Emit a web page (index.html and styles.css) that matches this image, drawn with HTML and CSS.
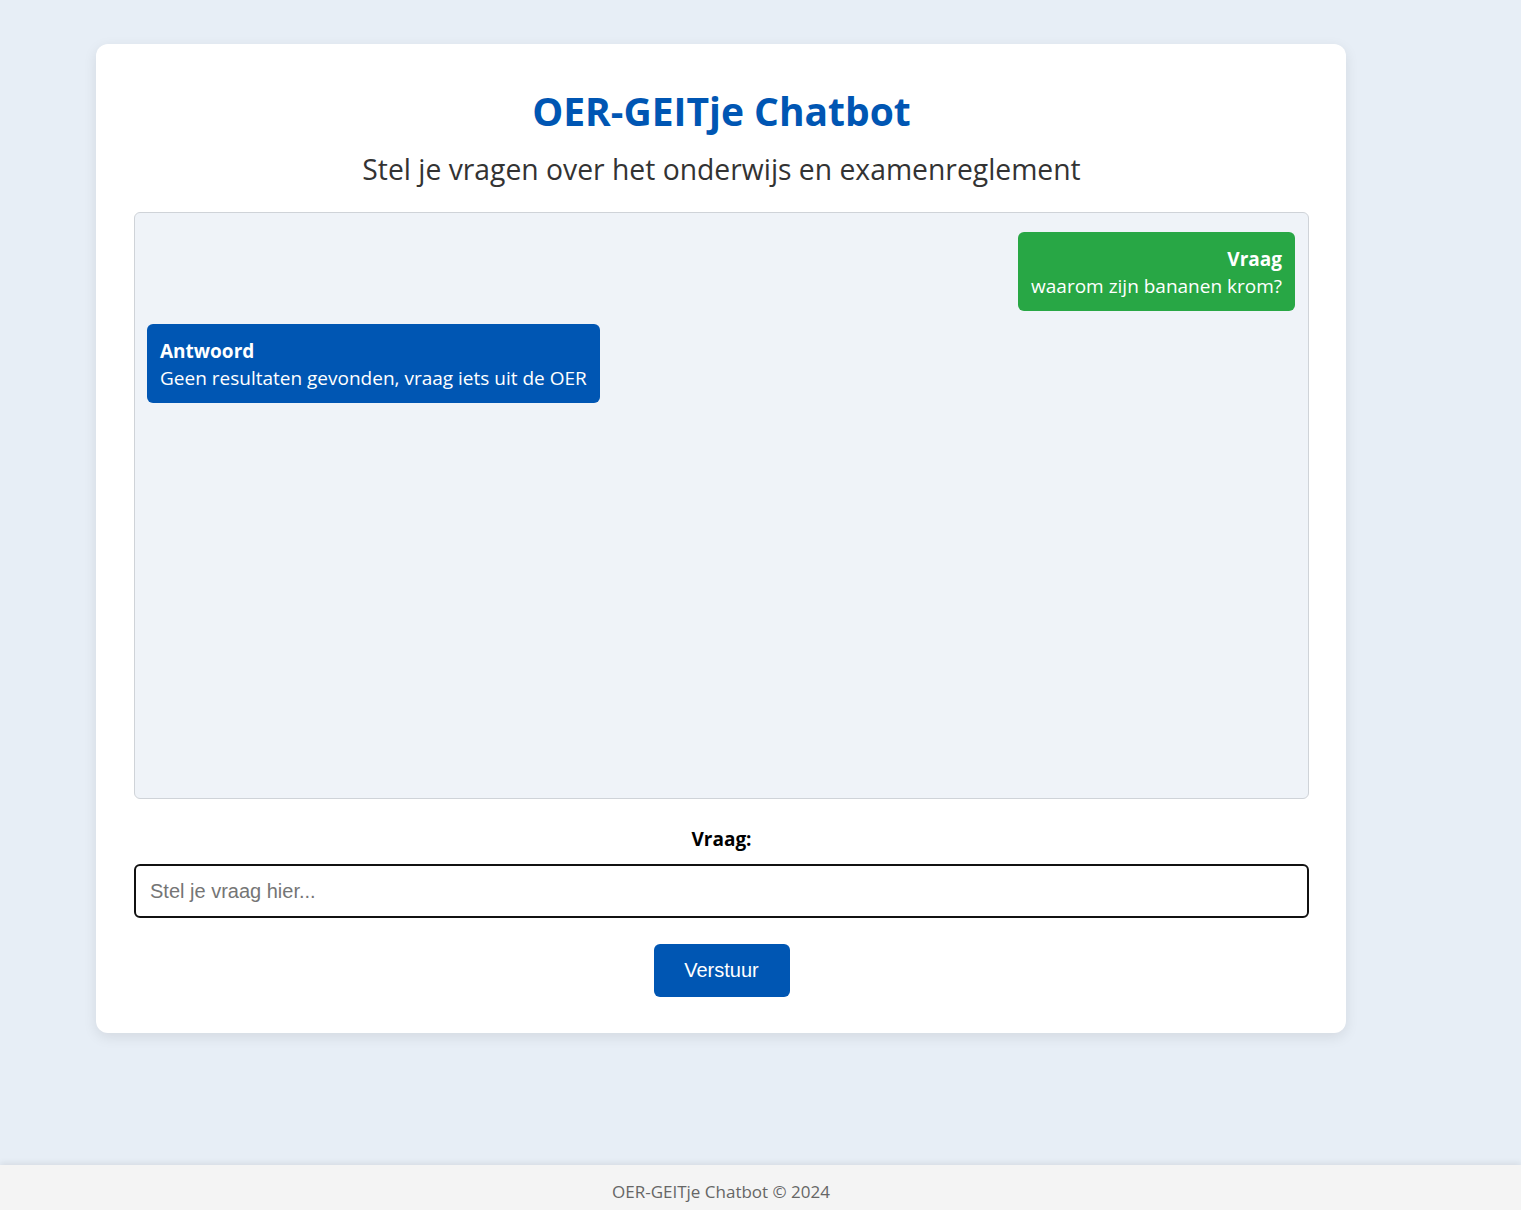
FILE: index.html
```html
<!DOCTYPE html>
<html lang="nl">
<head>
<meta charset="utf-8">
<title>OER-GEITje Chatbot</title>
<link rel="stylesheet" href="styles.css">
</head>
<body>
<main class="container">
  <h1 class="title">OER-GEITje Chatbot</h1>
  <p class="subtitle">Stel je vragen over het onderwijs en examenreglement</p>
  <div class="chat">
    <div class="msg msg-user">
      <strong>Vraag</strong>
      <span>waarom zijn bananen krom?</span>
    </div>
    <div class="msg msg-bot">
      <strong>Antwoord</strong>
      <span>Geen resultaten gevonden, vraag iets uit de OER</span>
    </div>
  </div>
  <form class="ask">
    <label class="ask-label" for="q">Vraag:</label>
    <input class="ask-input" id="q" type="text" placeholder="Stel je vraag hier...">
    <button class="ask-btn" type="button">Verstuur</button>
  </form>
</main>
<footer class="footer">
  <div class="footer-inner">OER-GEITje Chatbot © 2024</div>
</footer>
</body>
</html>
```

FILE: styles.css
```css
* { box-sizing: border-box; }

html, body {
  margin: 0;
  padding: 0;
}

body {
  min-height: 100vh;
  display: flex;
  flex-direction: column;
  background: #e7eef6;
  font-family: "Open Sans", "Noto Sans", sans-serif;
  color: #333;
}

.container {
  width: 1250px;
  margin: 44px 0 0 96px;
  padding: 43px 37px 36px 38px;
  background: #fff;
  border-radius: 12px;
  box-shadow: 0 4px 14px rgba(0, 0, 0, 0.09);
}

.title {
  margin: 0;
  font-size: 39px;
  line-height: 48px;
  font-weight: 700;
  color: #0056b3;
  text-align: center;
}

.subtitle {
  margin: 16px 0 25px;
  font-size: 28.3px;
  line-height: 36px;
  color: #333;
  text-align: center;
}

.chat {
  height: 587px;
  border: 1px solid #cfd3d8;
  border-radius: 6px;
  background: #eff3f8;
  padding: 19px 13px 12px 12px;
  display: flex;
  flex-direction: column;
  align-items: flex-start;
  gap: 13px;
  overflow-y: auto;
}

.msg {
  display: flex;
  flex-direction: column;
  padding: 14px 13px 11px;
  border-radius: 6px;
  color: #fff;
  font-size: 19px;
  line-height: 27px;
}

.msg strong { font-weight: 700; }

.msg-user {
  align-self: flex-end;
  text-align: right;
  background: #28a745;
}

.msg-bot {
  align-self: flex-start;
  background: #0056b3;
}

.ask {
  display: flex;
  flex-direction: column;
  align-items: center;
}

.ask-label {
  margin-top: 28px;
  font-size: 19px;
  line-height: 24px;
  font-weight: 700;
  color: #000;
}

.ask-input {
  margin-top: 13px;
  width: 100%;
  height: 54px;
  border: 2px solid #111;
  border-radius: 6px;
  padding: 0 14px;
  font-family: "Liberation Sans", Arial, sans-serif;
  font-size: 20px;
  color: #222;
  background: #fff;
  outline: none;
}

.ask-input::placeholder { color: #757575; }

.ask-btn {
  margin-top: 26px;
  width: 136px;
  height: 53px;
  border: none;
  border-radius: 6px;
  background: #0056b3;
  color: #fff;
  font-family: "Liberation Sans", Arial, sans-serif;
  font-size: 20px;
  cursor: pointer;
}

.footer {
  margin-top: auto;
  height: 45px;
  background: #f4f4f4;
  box-shadow: 0 -2px 6px rgba(0, 0, 0, 0.08);
}

.footer-inner {
  width: 1442px;
  text-align: center;
  font-size: 17px;
  line-height: 45px;
  color: #666;
  padding-top: 4px;
}
```
